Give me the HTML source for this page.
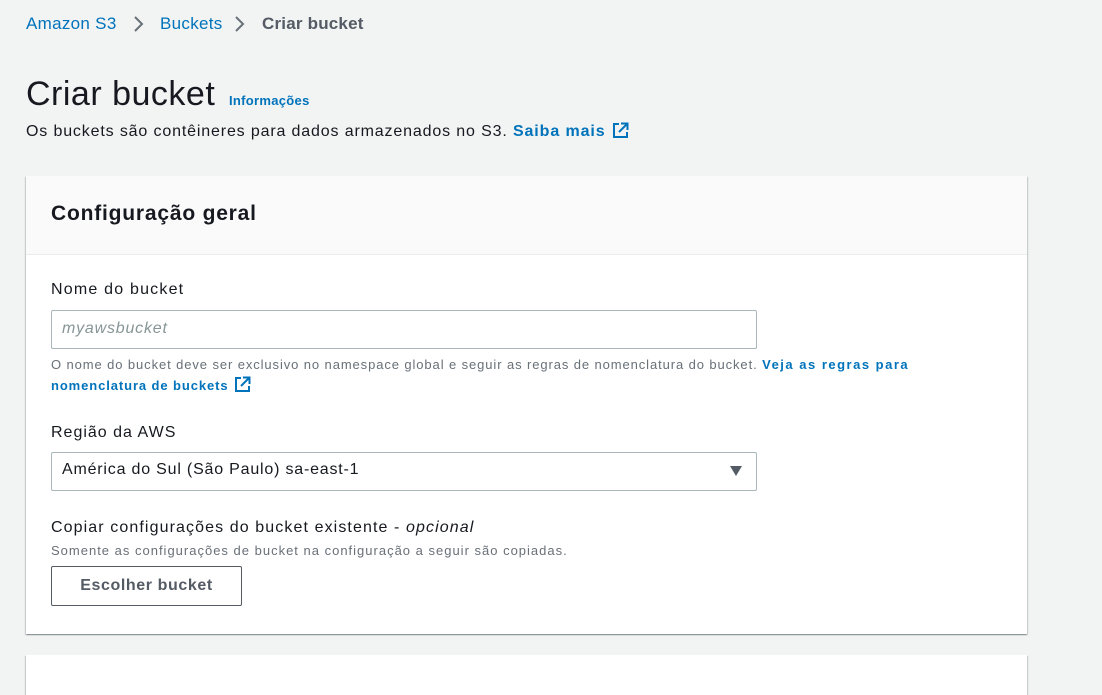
<!DOCTYPE html>
<html><head><meta charset="utf-8"><style>
*{margin:0;padding:0;box-sizing:border-box}
body{width:1102px;height:672px;background:#f2f3f3;font-family:"Liberation Sans",sans-serif;color:#16191f;position:relative;overflow:hidden}
.a{position:absolute;white-space:nowrap}
.link{color:#0073bb}
.card{position:absolute;left:26px;width:1001px;background:#fff;box-shadow:0 1px 1px 0 rgba(0,28,36,.3),1px 1px 1px 0 rgba(0,28,36,.15),-1px 1px 1px 0 rgba(0,28,36,.15)}
.inp{position:absolute;left:51px;width:706px;height:39px;border:1px solid #aab7b8;border-radius:2px;background:#fff}
svg{position:absolute}
.ic{position:relative;display:inline-block;vertical-align:-3px;margin-left:6px}
</style></head><body>
<div class="a link" style="left:26px;top:14px;font-size:17px;letter-spacing:.3px">Amazon S3</div>
<svg style="left:132px;top:15px" width="14" height="18" viewBox="0 0 14 18"><path d="M3 2l7 7-7 7" stroke="#687078" stroke-width="2" fill="none"/></svg>
<div class="a link" style="left:160px;top:14px;font-size:17px;letter-spacing:.3px">Buckets</div>
<svg style="left:233px;top:15px" width="14" height="18" viewBox="0 0 14 18"><path d="M3 2l7 7-7 7" stroke="#687078" stroke-width="2" fill="none"/></svg>
<div class="a" style="left:262px;top:14px;font-size:17px;font-weight:bold;color:#545b64;letter-spacing:.2px">Criar bucket</div>

<div class="a" style="left:26px;top:75px;font-size:34px;letter-spacing:.5px">Criar bucket</div>
<div class="a link" style="left:229px;top:93px;font-size:13px;font-weight:bold;letter-spacing:.3px">Informações</div>
<div class="a" style="left:26px;top:122px;font-size:16px;letter-spacing:.85px">Os buckets são contêineres para dados armazenados no S3. <b class="link" style="letter-spacing:.9px">Saiba mais</b><svg class="ic" width="17" height="17" viewBox="0 0 17 17"><path d="M7 2H2v13h13v-5" stroke="#0073bb" stroke-width="2" fill="none"/><path d="M9 1.5h6.5V8M15 2L7 10" stroke="#0073bb" stroke-width="2" fill="none"/></svg></div>

<div class="card" style="top:176px;height:458px">
  <div style="height:79px;background:#fafafa;border-bottom:1px solid #eaeded"></div>
</div>
<div class="a" style="left:51px;top:202px;font-size:21px;font-weight:bold;letter-spacing:.8px">Configuração geral</div>
<div class="a" style="left:51px;top:281px;font-size:16px;letter-spacing:1.2px">Nome do bucket</div>
<div class="inp" style="top:310px"></div>
<div class="a" style="left:62px;top:320px;font-size:16px;font-style:italic;color:#879596;letter-spacing:.8px">myawsbucket</div>
<div class="a" style="left:51px;top:357px;font-size:13px;color:#687078;letter-spacing:.9px">O nome do bucket deve ser exclusivo no namespace global e seguir as regras de nomenclatura do bucket. <b class="link" style="letter-spacing:1.5px">Veja as regras para</b></div>
<div class="a link" style="left:51px;top:376px;font-size:13px;font-weight:bold;letter-spacing:.9px">nomenclatura de buckets<svg class="ic" width="17" height="17" viewBox="0 0 17 17"><path d="M7 2H2v13h13v-5" stroke="#0073bb" stroke-width="2" fill="none"/><path d="M9 1.5h6.5V8M15 2L7 10" stroke="#0073bb" stroke-width="2" fill="none"/></svg></div>
<div class="a" style="left:51px;top:424px;font-size:16px;letter-spacing:1px">Região da AWS</div>
<div class="inp" style="top:452px"></div>
<div class="a" style="left:62px;top:461px;font-size:16px;letter-spacing:.8px">América do Sul (São Paulo) sa-east-1</div>
<svg style="left:729px;top:465px" width="14" height="12" viewBox="0 0 14 12"><path d="M1 1h12L7 11z" fill="#545b64"/></svg>
<div class="a" style="left:51px;top:519px;font-size:16px;letter-spacing:1.1px">Copiar configurações do bucket existente - <i>opcional</i></div>
<div class="a" style="left:51px;top:543px;font-size:13px;color:#687078;letter-spacing:1px">Somente as configurações de bucket na configuração a seguir são copiadas.</div>
<div class="a" style="left:51px;top:566px;width:191px;height:40px;border:1px solid #545b64;border-radius:2px;background:#fff;font-size:16px;font-weight:bold;color:#545b64;text-align:center;line-height:38px;letter-spacing:.6px">Escolher bucket</div>
<div class="card" style="top:655px;height:40px"></div>
</body></html>
